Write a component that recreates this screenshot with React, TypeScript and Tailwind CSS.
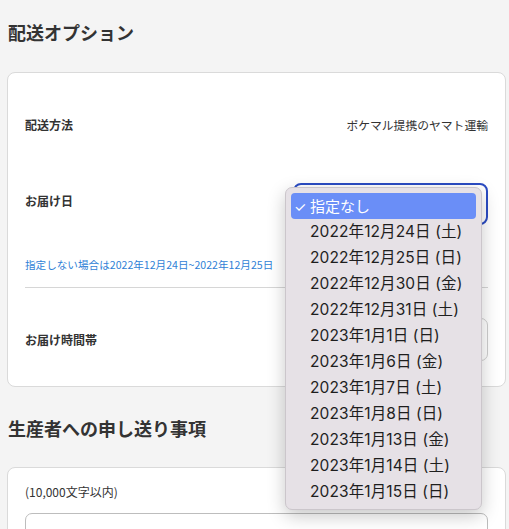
import React from "react";

const dates = [
  "2022年12月24日 (土)",
  "2022年12月25日 (日)",
  "2022年12月30日 (金)",
  "2022年12月31日 (土)",
  "2023年1月1日 (日)",
  "2023年1月6日 (金)",
  "2023年1月7日 (土)",
  "2023年1月8日 (日)",
  "2023年1月13日 (金)",
  "2023年1月14日 (土)",
  "2023年1月15日 (日)",
];

export default function App() {
  return (
    <div
      className="relative w-[509px] h-[529px] overflow-hidden bg-[#f4f4f4] text-[#333]"
      style={{ fontFamily: '"Noto Sans CJK JP", "Noto Sans", sans-serif' }}
    >
      <h2 className="pl-[8px] pt-[18px] text-[18px] leading-[28px] font-bold">
        配送オプション
      </h2>

      <div className="ml-[7px] mt-[26px] w-[499px] rounded-[8px] border border-[#dadada] bg-white px-[17px] pb-[25px]">
        <div className="mt-[30px] flex h-[44px] items-center justify-between">
          <span className="text-[12px] font-bold">配送方法</span>
          <span className="text-[11.8px]">ポケマル提携のヤマト運輸</span>
        </div>

        <div className="mt-[36px] flex items-start justify-between">
          <span className="pt-[9px] text-[12px] font-bold">お届け日</span>
          <div className="h-[42px] w-[195px] rounded-[8px] border-2 border-[#2b4cc3] bg-white" />
        </div>

        <p className="mt-[33px] text-[10.6px] leading-[14px] text-[#2f7fd6]">
          指定しない場合は2022年12月24日~2022年12月25日
        </p>

        <div className="mt-[15px] h-px bg-[#d6d6d6]" />

        <div className="mt-[30px] flex items-center justify-between">
          <span className="text-[12px] font-bold">お届け時間帯</span>
          <div className="h-[43px] w-[195px] rounded-[7px] border border-[#cfcfcf] bg-white" />
        </div>
      </div>

      <h2 className="pl-[8px] mt-[27px] text-[18px] leading-[28px] font-bold">
        生産者への申し送り事項
      </h2>

      <div className="ml-[7px] mt-[25px] w-[499px] rounded-[8px] border border-[#dadada] bg-white px-[17px] pt-[16px] pb-[40px]">
        <p className="text-[12px] leading-[16px]">(10,000文字以内)</p>
        <div className="mt-[13px] h-[60px] rounded-[7px] border border-[#bdbdbd] bg-white" />
      </div>

      <div
        className="absolute left-[285px] top-[187px] h-[323px] w-[197px] rounded-[7px] border border-[#cbc6cb] bg-[#e6e1e6] px-[5px] pt-[5px] shadow-[0_6px_18px_rgba(0,0,0,0.22)]"
        style={{ fontFamily: '"Inter", "Noto Sans CJK JP", sans-serif' }}
      >
        <div className="flex h-[26px] items-center rounded-[4px] bg-[#6a8ef7] pl-[3px] text-[15px] text-white">
          <span className="w-[16px] text-[14px]">✓</span>
          <span style={{ fontFamily: '"Noto Sans CJK JP", sans-serif' }}>指定なし</span>
        </div>
        {dates.map((d) => (
          <div
            key={d}
            className="flex h-[26px] items-center pl-[19px] text-[15.5px] text-[#1e1e1e] tracking-[0.1px]"
          >
            {d}
          </div>
        ))}
      </div>
    </div>
  );
}
